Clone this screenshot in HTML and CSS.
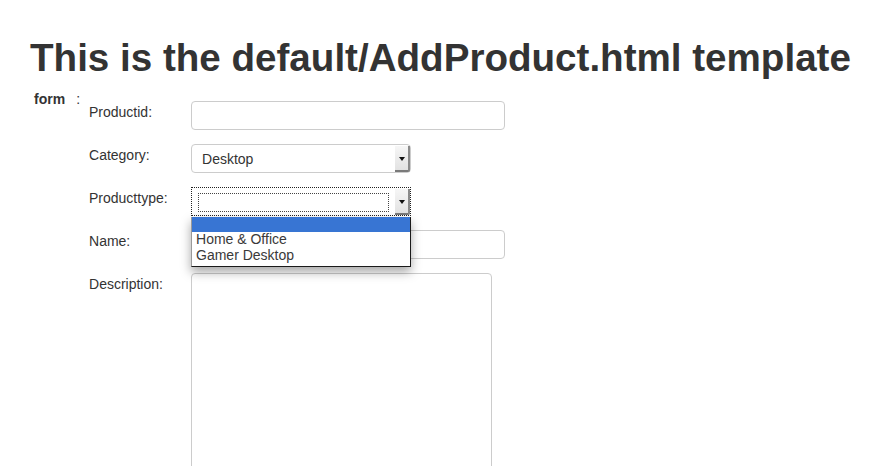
FILE: index.html
```html
<!DOCTYPE html>
<html lang="en">
<head>
  <meta charset="UTF-8">
  <meta name="viewport" content="width=device-width, initial-scale=1.0">
  <title>AddProduct</title>
  <link rel="stylesheet" href="styles.css">
</head>
<body>
  <h1>This is the default/AddProduct.html template</h1>

  <div class="record">
    <div class="record-key">form</div>
    <div class="record-sep">:</div>
    <form class="product-form">
      <label class="field-label" for="productid">Productid:</label>
      <input type="text" class="text-input" id="productid">

      <label class="field-label">Category:</label>
      <div class="select">
        <span class="select-value">Desktop</span>
        <span class="select-arrow"></span>
      </div>

      <label class="field-label">Producttype:</label>
      <div class="select-wrap">
        <div class="select focused">
          <span class="select-value"><span class="focus-ring"></span></span>
          <span class="select-arrow"></span>
        </div>
        <ul class="options">
          <li class="selected">&nbsp;</li>
          <li>Home &amp; Office</li>
          <li>Gamer Desktop</li>
        </ul>
      </div>

      <label class="field-label" for="name">Name:</label>
      <input type="text" class="text-input" id="name">

      <label class="field-label" for="description">Description:</label>
      <textarea class="text-area" id="description"></textarea>
    </form>
  </div>
</body>
</html>
```

FILE: styles.css
```css
body {
  margin: 0;
  font-family: "Liberation Sans", Arial, sans-serif;
  font-size: 14px;
  line-height: 20px;
  color: #333;
  background: #fff;
}
h1 {
  font-size: 38.6px;
  font-weight: bold;
  line-height: 1.1;
  margin: 37px 0 10px 30px;
}
.record {
  display: flex;
  align-items: flex-start;
  padding-left: 34px;
  margin-top: 1px;
}
.record-key {
  font-weight: bold;
}
.record-sep {
  margin-left: 11px;
}
.product-form {
  display: grid;
  grid-template-columns: 102px auto;
  row-gap: 14px;
  margin: 12px 0 0 9px;
  align-items: start;
}
.field-label {
  line-height: 20px;
  padding-top: 1px;
}
.text-input {
  width: 314px;
  height: 29px;
  box-sizing: border-box;
  border: 1px solid #ccc;
  border-radius: 4px;
  margin: 0;
  padding: 0 10px;
  font: inherit;
}
.text-area {
  width: 301px;
  height: 220px;
  box-sizing: border-box;
  border: 1px solid #ccc;
  border-radius: 4px;
  margin: 0;
  resize: none;
  font: inherit;
}
.select {
  width: 220px;
  height: 29px;
  box-sizing: border-box;
  border: 1px solid #ccc;
  border-radius: 4px;
  display: flex;
  align-items: stretch;
  background: #fff;
}
.select-value {
  flex: 1;
  padding-left: 10px;
  line-height: 29px;
  color: #333;
}
.select-arrow {
  width: 13px;
  margin: 1px 0 0 0;
  background: linear-gradient(#f6f6f6, #e2e2e2);
  border-right: 2px solid #8a8a8a;
  border-bottom: 2px solid #7a7a7a;
  border-bottom-right-radius: 2px;
  position: relative;
}
.select-arrow::after {
  content: "";
  position: absolute;
  left: 4px;
  top: 11px;
  border-left: 3px solid transparent;
  border-right: 3px solid transparent;
  border-top: 4px solid #111;
}
.select-wrap {
  position: relative;
  width: 220px;
}
.select.focused {
  border: 1px dotted #222;
  border-radius: 0;
}
.select.focused .select-value {
  padding: 5px 6px 4px 6px;
}
.focus-ring {
  display: block;
  height: 17px;
  border: 1px dotted #444;
}
.options {
  position: absolute;
  top: calc(100% + 1px);
  left: 0;
  width: 220px;
  box-sizing: border-box;
  margin: 0;
  padding: 0 0 3px 0;
  list-style: none;
  background: #fff;
  border-left: 1px solid #999;
  border-right: 1px solid #1a1a1a;
  border-bottom: 1px solid #1a1a1a;
  box-shadow: 0 5px 10px rgba(0, 0, 0, 0.35);
  z-index: 2;
}
.options li {
  line-height: 15px;
  padding-left: 4px;
  color: #3a3a3a;
}
.options .selected {
  height: 15px;
  background: #3875d3;
}
.options li + li {
  line-height: 15.5px;
}
```
